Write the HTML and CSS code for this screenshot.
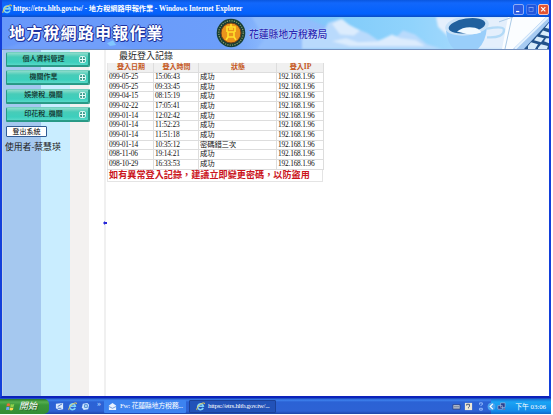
FILE: index.html
```html
<!DOCTYPE html>
<html lang="zh-Hant">
<head>
<meta charset="utf-8">
<title>地方稅網路申報作業</title>
<link rel="stylesheet" href="styles.css">
</head>
<body>
<svg class="defs" width="0" height="0">
  <symbol id="ie" viewBox="0 0 10 10"><path d="M8 6.5A3.2 3.2 0 1 1 8.2 4.8H3" fill="none" stroke="#7ed3fb" stroke-width="1.7"/><path d="M1 9C0 7 4 2 8 1Q10 .5 9.3 2.3" fill="none" stroke="#f5d04b" stroke-width="1"/></symbol>
</svg>
<div class="desktop">
  <div class="window">
    <header class="titlebar">
      <svg class="title-icon"><use href="#ie"/></svg>
      <span class="title">https://etrs.hltb.gov.tw/ - 地方稅網路申報作業 - Windows Internet Explorer</span>
      <div class="controls">
        <span class="ctl"><svg viewBox="0 0 11 11"><path d="M2.5 8h4" stroke="#fff" stroke-width="1.5"/></svg></span>
        <span class="ctl dim"><svg viewBox="0 0 11 11"><path d="M2.5 3h5v5h-5z" fill="none" stroke="#6c91ef"/><path d="M2 3h6" stroke="#88a9f7"/></svg></span>
        <span class="ctl close"><svg viewBox="0 0 11 11"><path d="M2.7 2.7l5 5m0-5l-5 5" stroke="#fff" stroke-width="1.4"/></svg></span>
      </div>
    </header>
    <div class="banner">
      <svg class="art" viewBox="0 0 547 33" preserveAspectRatio="none">
        <defs>
          <linearGradient id="sky"><stop offset="0" stop-color="#6797fa"/><stop offset=".4" stop-color="#6c9efa"/><stop offset=".48" stop-color="#8ab8fc"/><stop offset=".62" stop-color="#82ccfa"/><stop offset=".75" stop-color="#90d3fc"/><stop offset="1" stop-color="#c5e2fc"/></linearGradient>
          <filter id="soft"><feGaussianBlur stdDeviation="1"/></filter>
          <clipPath id="area"><path d="M0 0h547v33H0z"/></clipPath>
        </defs>
        <path d="M0 0h547v33H0z" fill="url(#sky)"/>
        <g clip-path="url(#area)">
        <g filter="url(#soft)">
          <path d="M250 0h50l25 10 15 23h-85l8-10z" fill="#91bdfc"/>
          <path d="M300 23l10-8 12 0 4-9 12-4 12 8 16 7 10 7 20-5 5-5 12 4 12 10 15 5H300z" fill="#b9dafc"/>
          <path d="M330 7l10-5 7 6 11 6-6 5-14-1zm0 18l14-3 12 4 20-1 14-7 8 4 16 2 9 6h-75z" fill="#dcecfd"/>
          <path d="M434 0h113v33h-74l-22-8-15-15z" fill="#e4effc"/>
          <path d="M0 33Q75 7 130 33z" fill="#719ffa"/>
        </g>
        <path d="M444 14q1 13 8 19h24q8-8 9-23z" fill="#99cefa"/>
        <ellipse cx="465" cy="9" rx="22" ry="10" fill="#c9e2f8" transform="rotate(-7 465 9)"/>
        <ellipse cx="465" cy="9" rx="18.5" ry="7.5" fill="#21619e" transform="rotate(-9 465 9)"/>
        <path d="M455 15q7-6 18-4 6 2 6 5-9 4-24-1z" fill="#f2faff"/>
        <path d="M485 12q16-3 17 1 0 9-17 8" fill="none" stroke="#b3daf7" stroke-width="2.4"/>
        <path d="M506 0h41v33h-47z" fill="#fbfdff"/>
        <path d="M510 0l-7 33M497 5l14-5" stroke="#a9c8e6" fill="none"/>
        <path d="M511 33L544 0h3v8l-22 25z" fill="#a7cbf2"/>
        <path d="M513 33L546 0" stroke="#e8f4ff" stroke-width="2"/>
        <path d="M522 33l25-28v28z" fill="#22528b"/>
        <g fill="#d9ecfb"><path d="M538 18l3-4 6 2v4zM532 24l3-4 7 2-3 4zM526 30l3-4 7 2-3 5h-7zM542 25l2-3h3v5zM536 32l3-4 7 2-1 3h-9zM543 11l4-5v6z"/></g>
        <path d="M105 27l6-3 3 5-6 1z" fill="#81c6ff"/>
        </g>
      </svg>
      <h1 class="site-name">地方稅網路申報作業</h1>
      <svg class="seal" viewBox="0 0 30 30"><circle cx="15" cy="15" r="14.3" fill="#173e35"/><circle cx="15" cy="15" r="12.2" fill="none" stroke="#8f9d66" stroke-width="1.2" stroke-dasharray="1.2 1.2"/><circle cx="15" cy="15" r="10" fill="#ea941d" stroke="#77401b"/><path d="M11 14V9h8v5M15 6v3M12 14h6v5h-6zM12 19l-2 3M18 19l2 3M13 11h4" fill="none" stroke="#ffe12b" stroke-width="1.6"/></svg>
      <span class="bureau">花蓮縣地方稅務局</span>
    </div>
    <div class="content">
      <nav class="sidebar">
        <div class="menu">
          <a class="item"><span>個人資料管理</span><i class="plus"></i></a>
          <a class="item"><span>機關作業</span><i class="plus"></i></a>
          <a class="item"><span>娛樂稅_機關</span><i class="plus"></i></a>
          <a class="item"><span>印花稅_機關</span><i class="plus"></i></a>
        </div>
        <button class="logout">登出系統</button>
        <p class="user">使用者-蔡慧瑛</p>
      </nav>
      <div class="splitter"><svg viewBox="0 0 4 4"><path d="M0 2l2-2v1h2v2H2v1z" fill="#2727d8"/></svg></div>
      <main class="main">
        <h2 class="caption">最近登入記錄</h2>
        <table class="log">
          <colgroup><col class="c1"><col class="c2"><col class="c3"><col class="c4"></colgroup>
          <thead><tr><th>登入日期</th><th>登入時間</th><th>狀態</th><th>登入<span class="ip">IP</span></th></tr></thead>
          <tbody>
            <tr><td>099-05-25</td><td>15:06:43</td><td>成功</td><td>192.168.1.96</td></tr>
            <tr><td>099-05-25</td><td>09:33:45</td><td>成功</td><td>192.168.1.96</td></tr>
            <tr><td>099-04-15</td><td>08:15:19</td><td>成功</td><td>192.168.1.96</td></tr>
            <tr><td>099-02-22</td><td>17:05:41</td><td>成功</td><td>192.168.1.96</td></tr>
            <tr><td>099-01-14</td><td>12:02:42</td><td>成功</td><td>192.168.1.96</td></tr>
            <tr><td>099-01-14</td><td>11:52:23</td><td>成功</td><td>192.168.1.96</td></tr>
            <tr><td>099-01-14</td><td>11:51:18</td><td>成功</td><td>192.168.1.96</td></tr>
            <tr><td>099-01-14</td><td>10:35:12</td><td>密碼錯三次</td><td>192.168.1.96</td></tr>
            <tr><td>098-11-06</td><td>19:14:21</td><td>成功</td><td>192.168.1.96</td></tr>
            <tr><td>098-10-29</td><td>16:33:53</td><td>成功</td><td>192.168.1.96</td></tr>
          </tbody>
        </table>
        <p class="warning">如有異常登入記錄，建議立即變更密碼，以防盜用</p>
      </main>
    </div>
  </div>
  <footer class="taskbar">
    <div class="start"><svg viewBox="0 0 10 10"><path d="M1 2q2-1 3.5 0L4 5Q2 4 .5 5z" fill="#ee6b37"/><path d="M5.2 2.3q2 1 4 0L8.5 5.2q-2 1-3.8 0z" fill="#8ed14b"/><path d="M.4 5.7q2-1 3.4 0L3.2 9Q1.5 8 0 9z" fill="#6da5ff"/><path d="M4.5 6q2 1 3.8 0L7.6 9q-2 1-3.8 0z" fill="#ffd84b"/></svg><span>開始</span></div>
    <div class="quick">
      <svg viewBox="0 0 10 10"><path d="M1 2l8-1v7l-5 1-3-2z" fill="#dcebff"/><path d="M3 5l5-3M3 7h4" stroke="#426fc0"/></svg>
      <svg><use href="#ie"/></svg>
      <svg viewBox="0 0 10 10"><path d="M2 2l5-1 2 2-1 5-5 1-2-3z" fill="#c8e3ff"/><path d="M4 3h3v3H4z" fill="none" stroke="#4285cd"/></svg>
      <b>»</b>
    </div>
    <div class="task mail"><svg viewBox="0 0 10 10"><path d="M1 4l4-3 4 3v5H1z" fill="#e9f2ff"/><path d="M1 5l4 2 4-2" fill="none" stroke="#6995d4"/></svg><span>Fw: 花蓮縣地方稅務...</span></div>
    <div class="task active"><svg><use href="#ie"/></svg><span>https://etrs.hltb.gov.tw/...</span></div>
    <div class="lang">
      <svg viewBox="0 0 10 10"><path d="M1 3h8v5H1z" fill="#c9cfd7" stroke="#24408b"/><path d="M2 5h6M2 6.7h6" stroke="#445980" stroke-width=".6"/></svg>
      <svg viewBox="0 0 10 10"><path d="M1 1h8v8H1z" fill="#eee9d6"/><path d="M3 4V2.5h3V5L5 6v1" fill="none" stroke="#364468"/></svg>
      <svg viewBox="0 0 10 10"><path d="M4 3V1h3v2L5 4M4 7h3v2H4z" fill="none" stroke="#9fc4ff"/></svg>
    </div>
    <div class="tray">
      <svg class="chevron" viewBox="0 0 10 10"><circle cx="5" cy="5" r="4.3" fill="#4ba4ef"/><path d="M6.5 2L3.5 5l3 3" fill="none" stroke="#fff" stroke-width="1.3"/></svg>
      <svg viewBox="0 0 10 10"><path d="M1 4h5v4H1zM4 1h5v5H4z" fill="#253f90" stroke="#b0b9d8" stroke-width=".7"/><path d="M7 8h2" stroke="#cc5770"/></svg>
      <span>下午 03:06</span>
    </div>
  </footer>
</div>
</body>
</html>
```

FILE: styles.css
```css
* { box-sizing: border-box; }
body {
  margin: 0;
  background: #fff;
  font-family: "Liberation Serif", "Noto Sans CJK TC", serif;
  overflow: hidden;
}
svg { display: block; flex: none; }
.defs { display: none; }
h1, h2, p { margin: 0; font-weight: 400; white-space: nowrap; }
.desktop { width: 551px; height: 414px; display: flex; flex-direction: column; }
.window {
  height: 398px;
  border: solid #123fda;
  border-width: 0 2px 2px;
  border-bottom-color: #0c22bb;
  display: flex;
  flex-direction: column;
}

.titlebar {
  height: 17px;
  flex: none;
  display: flex;
  align-items: center;
  padding: 1px 0 0;
  background: linear-gradient(#0a57df, #1267fb 3px, #0261fc 14px, #0b4cc3);
  color: #fff;
}
.title-icon { width: 10px; height: 10px; margin-right: 1px; }
.title { font-size: 7.2px; line-height: 12px; font-weight: 700; white-space: nowrap; letter-spacing: -0.05px; }
.controls { display: flex; gap: 1.5px; margin-left: auto; }
.ctl { width: 11px; height: 11px; border: 1px solid #8eadf6; border-radius: 2px; background: #2b5be2; }
.ctl.dim { background: #1f55dc; border-color: #4b7ced; }
.ctl.close { background: #e35432; border-color: #f6c5bd; }
.ctl svg { width: 9px; height: 9px; }

.banner {
  position: relative;
  height: 33px;
  flex: none;
  display: flex;
  align-items: center;
  border-bottom: 1px solid #7590bd;
}
.art { position: absolute; inset: 0; width: 100%; height: 100%; }
.site-name {
  position: relative;
  width: 208px;
  margin-top: -2px;
  padding-left: 7px;
  font: 700 16px/30px "Noto Sans CJK TC", sans-serif;
  letter-spacing: 1.2px;
  color: #fff;
  text-shadow: 1px 0 #2034a0, -1px 0 #2034a0, 0 1px #2034a0, 0 -1px #2034a0, 1px 1px #2034a0;
}
.seal { position: relative; width: 30px; height: 30px; margin-left: 6px; }
.bureau {
  position: relative;
  margin: 1px 0 0 3px;
  font: 500 9.8px/14px "Noto Sans CJK TC", sans-serif;
  color: #2a29b4;
  text-shadow: 0 0 1px #d7e7ff, 0 0 1px #d7e7ff;
  white-space: nowrap;
}

.content { flex: 1; min-height: 0; display: flex; background: #fff; }
.sidebar {
  width: 101px;
  flex: none;
  padding: 2px 0 0 3px;
  border-left: 1px solid #c2d2e8;
  background: linear-gradient(90deg, #a5c8ef 38px, #c9edff 38px 67px, #f3f1f0 67px 86px, #fff 86px);
}
.menu { display: grid; gap: 3.4px; }
.item {
  display: flex;
  align-items: center;
  width: 84px;
  height: 15px;
  padding: 0 3px 1px 2px;
  border: 1px solid #289985;
  border-top-color: #74cfbf;
  border-radius: 2px 1px 2px 1px;
  background: linear-gradient(#8ddccb, #47ccb8 4px, #3dcfbd 9px, #61dccb);
  box-shadow: inset -1px -1px #2a9b88;
}
.item span {
  flex: 1;
  text-align: center;
  padding-right: 1px;
  font-size: 7px;
  line-height: 11px;
  color: #112c27;
  font-weight: 500;
  white-space: nowrap;
}
.plus {
  width: 7px;
  height: 7px;
  border: 1px solid #d5f5ee;
  border-radius: 2px;
  background: linear-gradient(#e9fffa, #e9fffa) center / 1px 5px no-repeat, linear-gradient(#e9fffa, #e9fffa) center / 5px 1px no-repeat, #429d91;
}
.logout {
  display: block;
  width: 41px;
  height: 11px;
  margin: 4px 0 0;
  padding: 0;
  border: 1px solid #315c94;
  border-radius: 1px;
  background: #fff;
  color: #000;
  font: 7px/8px "Liberation Serif", "Noto Sans CJK TC", serif;
}
.user { margin-top: 4px; font-size: 8.8px; line-height: 12px; color: #222; margin-left: -1px; }
.splitter { width: 3px; flex: none; display: flex; align-items: center; background: linear-gradient(90deg, #fff 1px, #f0f0f0 1px); }
.splitter svg { width: 4px; height: 4px; flex: none; }

.main { padding: 1px 0 0 1px; }
.caption { margin-left: 12px; font-size: 9px; line-height: 11px; color: #222; }
.log {
  width: 216px;
  margin-top: 1px;
  table-layout: fixed;
  border-collapse: collapse;
  font-size: 7.4px;
  color: #111;
}
.c1 { width: 46px; }
.c2 { width: 45px; }
.c3 { width: 78px; }
.c4 { width: 47px; }
.log tr { height: 9.65px; }
.log th, .log td { padding: 0 0 0 1px; height: 9.65px; line-height: 8.6px; border: solid #ddd; border-width: 0 1px 1px 0; white-space: nowrap; letter-spacing: -0.2px; }
.log td:first-child, .log th:first-child { border-left: 1px solid #e6e6e6; }
.log th { background: #f0f0f0; color: #c6581c; font-size: 7px; letter-spacing: 0; }
.ip { font-size: 7.6px; line-height: 1; }
.warning {
  width: 216px;
  padding-left: 1px;
  border: solid #e4e4e4;
  border-width: 0 1px 1px;
  color: #cb151d;
  font-size: 9.15px;
  line-height: 11.5px;
  font-weight: 700;
}

.taskbar {
  height: 16px;
  display: flex;
  align-items: center;
  background: linear-gradient(#143bb8, #3e83ee 2px, #2b62d5 4px, #2d62d4 13px, #1f44a8);
  color: #fff;
  font-size: 7px;
  white-space: nowrap;
}
.taskbar svg { width: 9px; height: 9px; }
.start {
  width: 49px;
  height: 15px;
  display: flex;
  align-items: center;
  gap: 4px;
  padding-left: 6px;
  border-radius: 0 5px 5px 0;
  background: linear-gradient(#267a27, #55ae4f 3px, #399739 6px, #358c35);
}
.start span { font-size: 9px; line-height: 12px; font-style: italic; text-shadow: 1px 1px #285f29; }
.quick { width: 55px; display: flex; align-items: center; gap: 4px; padding-left: 6px; }
.quick b { font-size: 8px; line-height: 8px; margin: -4px 0 0 3px; color: #a8ccff; }
.task {
  display: flex;
  align-items: center;
  gap: 3px;
  width: 82px;
  height: 13px;
  padding-left: 4px;
  border-radius: 1px;
  background: #3c83f0;
}
.task span { line-height: 11px; letter-spacing: -0.3px; }
.task.active { width: 87px; margin-left: 3px; padding-left: 6px; background: #2252b8; border: 1px solid #1b4199; }
.lang { margin-left: auto; display: flex; gap: 3px; padding-right: 6px; }
.tray {
  width: 60px;
  height: 15px;
  display: flex;
  align-items: center;
  gap: 1px;
  padding-right: 5px;
  background: linear-gradient(#1572d4, #1ba4f4 3px, #118bea 12px, #1167c8);
}
.tray .chevron { margin-left: -4px; }
.tray span { margin-left: auto; line-height: 11px; font-size: 6.8px; }
```
